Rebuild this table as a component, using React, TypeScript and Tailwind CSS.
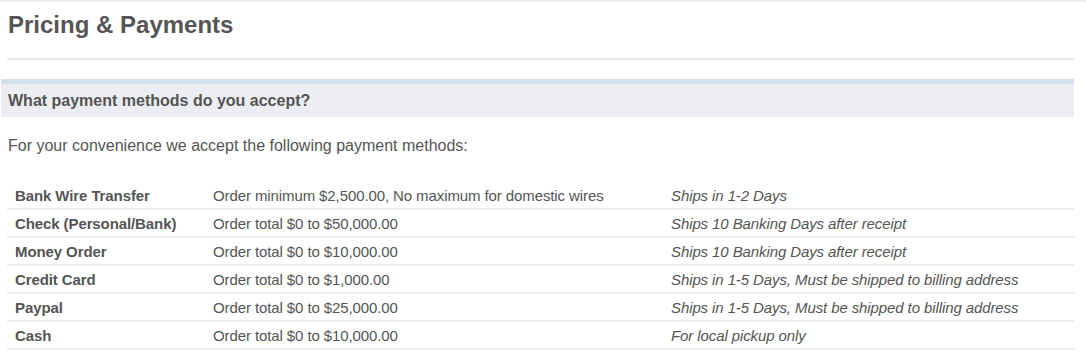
import React from "react";

const rows = [
  ["Bank Wire Transfer", "Order minimum $2,500.00, No maximum for domestic wires", "Ships in 1-2 Days"],
  ["Check (Personal/Bank)", "Order total $0 to $50,000.00", "Ships 10 Banking Days after receipt"],
  ["Money Order", "Order total $0 to $10,000.00", "Ships 10 Banking Days after receipt"],
  ["Credit Card", "Order total $0 to $1,000.00", "Ships in 1-5 Days, Must be shipped to billing address"],
  ["Paypal", "Order total $0 to $25,000.00", "Ships in 1-5 Days, Must be shipped to billing address"],
  ["Cash", "Order total $0 to $10,000.00", "For local pickup only"],
];

export default function App() {
  return (
    <div className="w-[1086px] h-[363px] bg-white overflow-hidden text-[#555] [font-family:'Liberation_Sans',Arial,sans-serif]">
      <div className="border-t-2 border-[#f0f0f0]">
        <div className="pr-[12px]">
          <h1 className="pl-[8px] pt-[8px] h-[56px] text-[24px] font-bold leading-[30px] text-[#555]">Pricing &amp; Payments</h1>
          <div className="ml-[7px] border-t-2 border-[#e8e8e8]" />
          <div className="mt-[19px] ml-[1px] border-t-[5px] border-[#d4e0ea] bg-[#eceef3] h-[38px] flex items-center pl-[7px]">
            <h2 className="text-[16px] font-bold text-[#555] leading-none">What payment methods do you accept?</h2>
          </div>
          <p className="pl-[8px] mt-[19px] text-[16px] leading-[20px] text-[#555]">For your convenience we accept the following payment methods:</p>
          <div className="ml-[7px] mt-[26px]">
            {rows.map((r, i) => (
              <div key={i} className="flex h-[28px] pt-[2px] items-center border-b-2 border-[#ececec] text-[15px] tracking-[-0.1px]">
                <div className="w-[206px] pl-[8px] font-bold">{r[0]}</div>
                <div className="w-[458px]">{r[1]}</div>
                <div className="italic">{r[2]}</div>
              </div>
            ))}
          </div>
        </div>
      </div>
    </div>
  );
}
